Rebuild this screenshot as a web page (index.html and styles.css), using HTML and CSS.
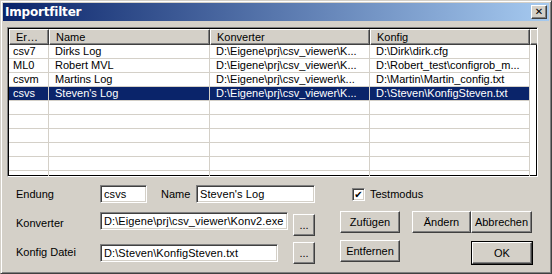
FILE: index.html
```html
<!DOCTYPE html>
<html lang="de">
<head>
    <meta charset="UTF-8">
    <title>Importfilter</title>
    <link rel="stylesheet" href="styles.css">
</head>
<body>
    <div class="window">
        <div class="titlebar">
            <span class="title">Importfilter</span>
            <button class="close">&#x2715;</button>
        </div>
        <div class="content">
            <div class="list">
                <div class="row head">
                    <div class="c c1">Er…</div>
                    <div class="c c2">Name</div>
                    <div class="c c3">Konverter</div>
                    <div class="c c4">Konfig</div>
                    <div class="c c5"></div>
                </div>
                <div class="row">
                    <div class="c c1">csv7</div>
                    <div class="c c2">Dirks Log</div>
                    <div class="c c3">D:\Eigene\prj\csv_viewer\K...</div>
                    <div class="c c4">D:\Dirk\dirk.cfg</div>
                </div>
                <div class="row">
                    <div class="c c1">ML0</div>
                    <div class="c c2">Robert MVL</div>
                    <div class="c c3">D:\Eigene\prj\csv_viewer\K...</div>
                    <div class="c c4">D:\Robert_test\configrob_m...</div>
                </div>
                <div class="row">
                    <div class="c c1">csvm</div>
                    <div class="c c2">Martins Log</div>
                    <div class="c c3">D:\Eigene\prj\csv_viewer\k...</div>
                    <div class="c c4">D:\Martin\Martin_config.txt</div>
                </div>
                <div class="row selected">
                    <div class="c c1">csvs</div>
                    <div class="c c2">Steven's Log</div>
                    <div class="c c3">D:\Eigene\prj\csv_viewer\K...</div>
                    <div class="c c4">D:\Steven\KonfigSteven.txt</div>
                </div>
                <div class="row empty"><div class="c c1"></div><div class="c c2"></div><div class="c c3"></div><div class="c c4"></div></div>
                <div class="row empty"><div class="c c1"></div><div class="c c2"></div><div class="c c3"></div><div class="c c4"></div></div>
                <div class="row empty"><div class="c c1"></div><div class="c c2"></div><div class="c c3"></div><div class="c c4"></div></div>
                <div class="row empty"><div class="c c1"></div><div class="c c2"></div><div class="c c3"></div><div class="c c4"></div></div>
                <div class="row empty"><div class="c c1"></div><div class="c c2"></div><div class="c c3"></div><div class="c c4"></div></div>
                <div class="row empty"><div class="c c1"></div><div class="c c2"></div><div class="c c3"></div><div class="c c4"></div></div>
            </div>

            <div class="form">
                <div class="frow r1">
                    <label class="lbl">Endung</label>
                    <input class="field f-endung" value="csvs">
                    <label class="lbl-name">Name</label>
                    <input class="field f-name" value="Steven's Log">
                    <span class="check"><span class="box">&#x2714;</span>Testmodus</span>
                </div>
                <div class="frow r2">
                    <label class="lbl">Konverter</label>
                    <input class="field f-konv" value="D:\Eigene\prj\csv_viewer\Konv2.exe">
                    <button class="btn dots">...</button>
                    <button class="btn wide">Zufügen</button>
                    <button class="btn wide b-aendern">Ändern</button>
                    <button class="btn wide b-abbr">Abbrechen</button>
                </div>
                <div class="frow r3">
                    <label class="lbl">Konfig Datei</label>
                    <input class="field f-konfig" value="D:\Steven\KonfigSteven.txt">
                    <button class="btn dots">...</button>
                    <button class="btn wide b-entf">Entfernen</button>
                    <button class="btn wide ok">OK</button>
                </div>
            </div>
        </div>
    </div>
</body>
</html>
```

FILE: styles.css
```css
* {
    box-sizing: border-box;
}
body {
    margin: 0;
    font-family: "Liberation Sans", Arial, sans-serif;
    font-size: 11px;
    color: #000;
    background: #d4d0c8;
}
.window {
    width: 552px;
    height: 274px;
    background: #d4d0c8;
    border: 1px solid;
    border-color: #d4d0c8 #404040 #404040 #d4d0c8;
    box-shadow: inset 1px 1px #fff, inset -1px -1px #808080;
    padding: 2px;
    overflow: hidden;
}
.titlebar {
    height: 18px;
    background: linear-gradient(to right, #0a246a, #a6caf0);
    display: flex;
    align-items: center;
    justify-content: space-between;
    padding: 0 2px 0 2px;
}
.title {
    color: #fff;
    font-weight: bold;
    font-family: "DejaVu Sans", sans-serif;
    font-size: 12px;
    letter-spacing: -0.2px;
}
.close {
    width: 16px;
    height: 14px;
    padding: 0;
    margin: 0;
    font-size: 10px;
    line-height: 12px;
    font-weight: bold;
    background: #d4d0c8;
    border: 1px solid;
    border-color: #fff #404040 #404040 #fff;
    box-shadow: inset -1px -1px #808080;
    font-family: "DejaVu Sans", sans-serif;
    color: #000;
}
.content {
    padding: 6px 0 0 4px;
}
.list {
    width: 531px;
    height: 150px;
    background: #fff;
    border: 1px solid;
    border-color: #808080 #fff #fff #808080;
    box-shadow: inset 1px 1px #000, inset -1px -1px #000;
    padding: 1px;
    overflow: hidden;
}
.row {
    display: flex;
    height: 14px;
    line-height: 13px;
}
.c {
    flex: none;
    white-space: nowrap;
    overflow: hidden;
    border-right: 1px solid #d4d0c8;
    border-bottom: 1px solid #d4d0c8;
    padding-left: 4px;
}
.c1 { width: 40px; }
.c2 { width: 161px; padding-left: 6px; }
.c3 { width: 160px; padding-left: 6px; }
.c4 { width: 160px; padding-left: 6px; }
.c5 { width: 20px; }
.head {
    height: 16px;
    line-height: 14px;
}
.head .c {
    background: #d4d0c8;
    border: 1px solid;
    border-color: #fff #404040 #404040 #fff;
    box-shadow: inset -1px -1px #808080;
    padding-left: 6px;
}
.head .c5 {
    border-right: none;
    box-shadow: inset 0 -1px #808080;
}
.selected .c {
    background: #0a246a;
    color: #fff;
}
.form {
    padding: 8px 0 0 9px;
}
.frow {
    display: flex;
    align-items: flex-start;
}
.lbl {
    width: 84px;
    flex: none;
}
.field {
    height: 18px;
    font-family: "Liberation Sans", Arial, sans-serif;
    font-size: 11px;
    padding: 1px 2px 1px 3px;
    border: 1px solid;
    border-color: #808080 #fff #fff #808080;
    box-shadow: inset 1px 1px #404040, inset -1px -1px #d4d0c8;
    background: #fff;
    color: #000;
    outline: none;
    letter-spacing: 0.1px;
}
.r1 {
    height: 18px;
    align-items: center;
}
.f-endung { width: 47px; }
.lbl-name { margin-left: 14px; width: 35px; }
.f-name { width: 119px; }
.check {
    margin-left: 37px;
    display: flex;
    align-items: center;
}
.box {
    width: 13px;
    height: 13px;
    background: #fff;
    border: 1px solid;
    border-color: #808080 #fff #fff #808080;
    box-shadow: inset 1px 1px #404040, inset -1px -1px #d4d0c8;
    font-size: 10px;
    line-height: 11px;
    text-align: center;
    margin-right: 5px;
    font-family: "DejaVu Sans", sans-serif;
}
.btn {
    height: 22px;
    padding: 0;
    font-family: "Liberation Sans", Arial, sans-serif;
    font-size: 11px;
    color: #000;
    background: #d4d0c8;
    border: 1px solid;
    border-color: #fff #404040 #404040 #fff;
    box-shadow: inset -1px -1px #808080;
}
.r2 {
    margin-top: 8px;
    height: 29px;
}
.r2 .lbl { margin-top: 6px; }
.r2 .field { width: 188px; margin-top: 1px; }
.r2 .dots { margin-top: 3px; }
.dots {
    width: 22px;
    margin-left: 5px;
}
.wide {
    width: 60px;
    margin-left: 25px;
}
.b-aendern { margin-left: 12px; width: 59px; }
.b-abbr { margin-left: 0; width: 61px; }
.r3 .lbl { margin-top: 6px; }
.r3 .field { width: 178px; margin-top: 4px; }
.r3 .dots { margin-left: 15px; margin-top: 2px; }
.r3 .b-entf { margin-top: 0; }
.ok {
    margin-left: 72px;
    margin-top: 2px;
    outline: 1px solid #000;
    outline-offset: 0;
}
```
